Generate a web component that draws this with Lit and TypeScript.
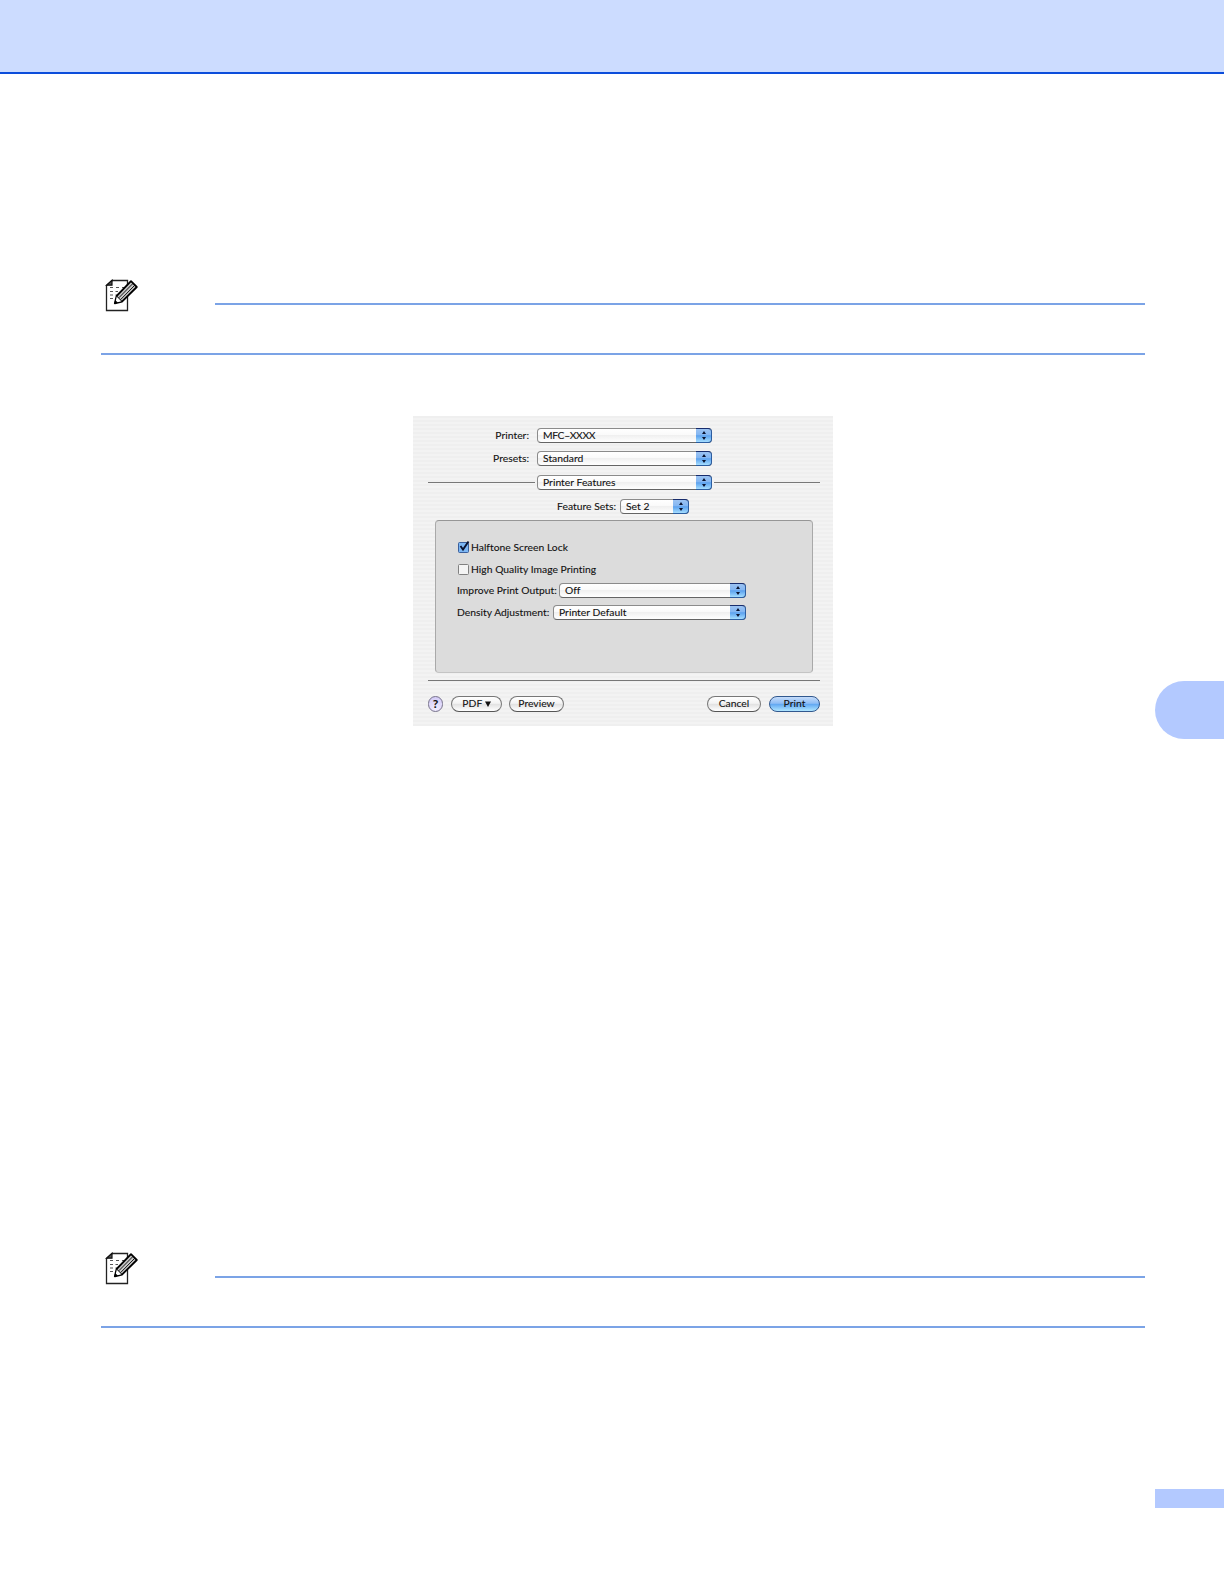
import { LitElement, html, css } from 'lit';
import { customElement, property } from 'lit/decorators.js';

@customElement('note-block')
export class NoteBlock extends LitElement {
  static styles = css`
    :host {
      display: block;
      height: 76px;
      box-sizing: border-box;
      border-bottom: 2px solid #7ba3e6;
    }

    .head {
      display: flex;
      align-items: flex-start;
      padding-left: 4px;
    }

    .icon {
      flex: none;
      width: 34px;
      height: 34px;
    }

    .rule {
      flex: 1;
      height: 2px;
      margin: 24px 0 0 76px;
      background: #7ba3e6;
    }
  `;

  render() {
    return html`
      <div class="head">
        <svg class="icon" viewBox="0 0 34 34">
          <path d="M7.5 1.5H22.5V31.5H1.5V6.5Z" fill="#fff" stroke="#222" stroke-width="1.3" />
          <path d="M1.5 6.2L7 1.2V6.2Z" fill="#555" stroke="#111" stroke-width="1.2" />
          <path
            d="M5 8.5H8M11 8.5H14M17 8.5H19M5 12.5H8M10.5 12.5H13M5 16H8M10.5 16H12M5 19.5H8"
            stroke="#555"
            stroke-width="1.2"
          />
          <path d="M9.8 24.4L11.6 17L26 2.2L31.8 8L17 22.6Z" fill="#c8c8c8" stroke="#000" stroke-width="1.8" stroke-linejoin="round" />
          <path d="M11.8 17.6L16.4 22.2L10.4 23.8Z" fill="#fff" />
          <path d="M11.8 17.2L17 22.4" fill="none" stroke="#000" stroke-width="1" />
          <path d="M13.8 18.8L28 4.4M15.6 20.6L29.8 6.2" fill="none" stroke="#000" stroke-width="0.9" />
          <path d="M9.2 25L10.2 21L13 23.8Z" fill="#000" />
        </svg>
        <div class="rule"></div>
      </div>
    `;
  }
}

@customElement('popup-button')
export class PopupButton extends LitElement {
  @property({ type: String })
  label = '';

  static styles = css`
    :host {
      display: flex;
      height: 15px;
      box-sizing: border-box;
      border: 1px solid #8b8b8b;
      border-bottom-color: #646464;
      border-radius: 4px;
      background: linear-gradient(#fff 0%, #fafafa 45%, #f0f0f0 50%, #fff 100%);
    }

    .label {
      flex: 1;
      padding-left: 5px;
      line-height: 13px;
      white-space: nowrap;
    }

    .arrows {
      flex: none;
      width: 16px;
      height: 15px;
      margin: -1px;
      border-radius: 0 4px 4px 0;
      box-sizing: border-box;
      border: solid #2c5da0;
      border-width: 1px 1px 1px 0;
      border-top-color: #172c6c;
      background: linear-gradient(#9cc3f2 0%, #83b6f2 45%, #5ba1ee 52%, #a5deff 100%);
    }

    svg {
      display: block;
      width: 15px;
      height: 13px;
    }
  `;

  render() {
    return html`
      <span class="label">${this.label}</span>
      <span class="arrows">
        <svg viewBox="0 0 15 13">
          <path d="M8 2L10 5H6ZM8 11L10 8H6Z" fill="#0a1430" />
        </svg>
      </span>
    `;
  }
}

@customElement('print-dialog')
export class PrintDialog extends LitElement {
  static styles = css`
    :host {
      display: flex;
      flex-direction: column;
      box-sizing: border-box;
      width: 420px;
      height: 310px;
      padding: 12px 13px 14px 15px;
      background: repeating-linear-gradient(#efefef 0 2px, #f3f3f3 2px 4px);
      font-family: Lato, 'Noto Sans', sans-serif;
      font-size: 10.3px;
      letter-spacing: 0.03px;
      color: #111;
      -webkit-text-stroke: 0.1px #111;
    }

    .row {
      display: flex;
      align-items: center;
      height: 15px;
      white-space: nowrap;
    }

    .row .name {
      width: 101px;
      margin-right: 8px;
      text-align: right;
      line-height: 15px;
    }

    .wide {
      width: 175px;
    }

    .model {
      letter-spacing: -0.35px;
    }

    .presets {
      margin-top: 8px;
    }

    .section {
      margin-top: 9px;
    }

    .line {
      height: 1px;
      background: #777;
    }

    .line.left {
      width: 107px;
      margin-right: 2px;
    }

    .line.right {
      flex: 1;
      margin-left: 2px;
    }

    .sets {
      margin-top: 9px;
    }

    .row.sets .name {
      width: 188px;
      margin-right: 4px;
    }

    .sets popup-button {
      width: 69px;
    }

    .panel {
      display: flex;
      flex-direction: column;
      box-sizing: border-box;
      height: 153px;
      margin: 6px 7px 0;
      padding: 20px 66px 0 21px;
      border: 1px solid #a9a9a9;
      border-top-color: #969696;
      border-bottom-color: #c4c4c4;
      border-radius: 4px;
      background: #dcdcdc;
    }

    .check {
      display: flex;
      align-items: center;
      height: 12px;
      margin-bottom: 10px;
      padding-left: 1px;
      white-space: nowrap;
    }

    .box {
      width: 12px;
      height: 13px;
      margin-right: 1px;
      overflow: visible;
    }

    .options {
      display: flex;
      flex-direction: column;
      gap: 7px;
      margin-top: -2px;
    }

    .option {
      display: flex;
      height: 15px;
      line-height: 15px;
      white-space: nowrap;
    }

    .option popup-button {
      flex: 1;
    }

    .improve {
      width: 98px;
      margin-right: 4px;
    }

    .density {
      width: 92px;
      margin-right: 4px;
    }

    .line.bottom {
      margin-top: 7px;
    }

    .buttons {
      display: flex;
      margin-top: 15px;
    }

    .button {
      box-sizing: border-box;
      height: 16px;
      border: 1px solid #777;
      border-bottom-color: #555;
      border-radius: 8px;
      background: linear-gradient(#fff 0%, #f3f3f3 45%, #e2e2e2 52%, #fff 100%);
      text-align: center;
      line-height: 13px;
      white-space: nowrap;
    }

    .help {
      width: 15px;
      border-color: #77728c;
      background: radial-gradient(circle at 50% 85%, #f1edff, #cfc6f5);
      font-size: 12px;
      font-weight: bold;
    }

    .pdf {
      width: 51px;
      margin-left: 8px;
    }

    .pdf svg {
      width: 6px;
      height: 6px;
    }

    .preview {
      width: 55px;
      margin-left: 7px;
    }

    .cancel {
      width: 54px;
      margin-left: auto;
    }

    .print {
      width: 51px;
      margin-left: 8px;
      border-color: #31588e;
      background: linear-gradient(#c5dcfa 0%, #8fbdf5 45%, #62a8f2 52%, #b0e6ff 100%);
    }
  `;

  render() {
    return html`
      <div class="row">
        <span class="name">Printer:</span>
        <popup-button class="wide model" label="MFC–XXXX"></popup-button>
      </div>
      <div class="row presets">
        <span class="name">Presets:</span>
        <popup-button class="wide" label="Standard"></popup-button>
      </div>
      <div class="row section">
        <div class="line left"></div>
        <popup-button class="wide" label="Printer Features"></popup-button>
        <div class="line right"></div>
      </div>
      <div class="row sets">
        <span class="name">Feature Sets:</span>
        <popup-button label="Set 2"></popup-button>
      </div>
      <div class="panel">
        <div class="check">
          <svg class="box" viewBox="0 0 12 13">
            <rect x="0.5" y="1.5" width="10" height="10" rx="1" fill="#7db7f4" stroke="#3a5f9c" />
            <path d="M2.5 5L5 8.5L10.5 0.5" fill="none" stroke="#0a1230" stroke-width="1.9" />
          </svg>
          <span>Halftone Screen Lock</span>
        </div>
        <div class="check">
          <svg class="box" viewBox="0 0 12 13">
            <rect x="0.5" y="1.5" width="10" height="10" rx="1" fill="#f4f4f4" stroke="#808080" />
          </svg>
          <span>High Quality Image Printing</span>
        </div>
        <div class="options">
          <div class="option">
            <span class="improve">Improve Print Output:</span>
            <popup-button label="Off"></popup-button>
          </div>
          <div class="option">
            <span class="density">Density Adjustment:</span>
            <popup-button label="Printer Default"></popup-button>
          </div>
        </div>
      </div>
      <div class="line bottom"></div>
      <div class="buttons">
        <div class="button help">?</div>
        <div class="button pdf">
          PDF
          <svg viewBox="0 0 6 6"><path d="M0 0.5H6L3 6Z" fill="#111" /></svg>
        </div>
        <div class="button preview">Preview</div>
        <div class="button cancel">Cancel</div>
        <div class="button print">Print</div>
      </div>
    `;
  }
}

@customElement('app-root')
export class AppRoot extends LitElement {
  static styles = css`
    :host {
      display: flex;
      flex-direction: column;
      height: 1580px;
      background: #fff;
    }

    .header {
      height: 72px;
      flex: none;
      background: #ccdcff;
      border-bottom: 2px solid #0b4ddb;
    }

    .body {
      flex: 1;
      display: flex;
      justify-content: space-between;
    }

    .content {
      width: 1044px;
      margin-left: 101px;
      padding-top: 205px;
    }

    .shot {
      margin: 61px 0 0 312px;
    }

    .second {
      margin-top: 526px;
    }

    .side {
      width: 69px;
      padding-top: 607px;
    }

    .tab {
      height: 58px;
      border-radius: 29px 0 0 29px;
      background: #b3c9ff;
    }

    .number {
      height: 19px;
      margin-top: 750px;
      background: #b3c9ff;
    }
  `;

  render() {
    return html`
      <div class="header"></div>
      <div class="body">
        <div class="content">
          <note-block></note-block>
          <print-dialog class="shot"></print-dialog>
          <note-block class="second"></note-block>
        </div>
        <div class="side">
          <div class="tab"></div>
          <div class="number"></div>
        </div>
      </div>
    `;
  }
}

declare global {
  interface HTMLElementTagNameMap {
    'app-root': AppRoot;
    'note-block': NoteBlock;
    'popup-button': PopupButton;
    'print-dialog': PrintDialog;
  }
}
